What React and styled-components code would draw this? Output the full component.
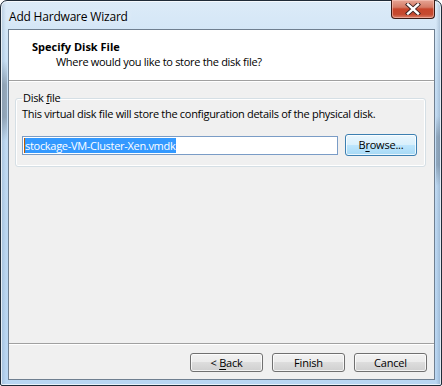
import styled, { createGlobalStyle } from "styled-components";

const GlobalStyle = createGlobalStyle`
  html, body {
    margin: 0;
    padding: 0;
    background: #ffffff;
  }
  body {
    font-family: "Open Sans", "Noto Sans", "DejaVu Sans", sans-serif;
    font-size: 11px;
    letter-spacing: -0.3px;
    color: #000;
  }
`;

const Frame = styled.div`
  box-sizing: border-box;
  width: 442px;
  height: 386px;
  border: 1px solid #1f2b38;
  border-radius: 7px 7px 2px 2px;
  padding: 0 6px 5px 7px;
  display: flex;
  flex-direction: column;
  background:
    linear-gradient(180deg, rgba(160, 175, 190, 0) 0%, rgba(110, 125, 140, 0.55) 30%, rgba(110, 125, 140, 0.55) 70%, rgba(160, 175, 190, 0) 100%) left 1px top 60px / 5px 80px no-repeat,
    linear-gradient(180deg, rgba(160, 175, 190, 0) 0%, rgba(100, 120, 140, 0.5) 30%, rgba(100, 120, 140, 0.5) 70%, rgba(160, 175, 190, 0) 100%) right 1px top 115px / 4px 70px no-repeat,
    linear-gradient(90deg, rgba(120, 150, 180, 0.35) 0px, rgba(255, 255, 255, 0) 5px),
    linear-gradient(270deg, rgba(90, 120, 150, 0.35) 0px, rgba(255, 255, 255, 0) 5px),
    linear-gradient(180deg, #dcebf8 0%, #c6def4 20%, #bcd7f1 60%, #b9d6f2 100%);
  box-shadow: inset 0 0 0 1px rgba(255, 255, 255, 0.7);
`;

const TitleBar = styled.div`
  height: 28px;
  display: flex;
  align-items: flex-start;
  justify-content: space-between;
`;

const Caption = styled.div`
  font-size: 12px;
  letter-spacing: -0.2px;
  line-height: 14px;
  padding-top: 9px;
  padding-left: 1px;
  color: #000;
  text-shadow: 0 0 6px rgba(255, 255, 255, 0.9);
`;

const CloseButton = styled.div`
  box-sizing: border-box;
  width: 44px;
  height: 19px;
  margin-top: -1px;
  border: 1px solid #3b1a14;
  border-top: none;
  border-radius: 0 0 4px 4px;
  background: linear-gradient(180deg, #e6a595 0%, #d57b66 40%, #c7452b 50%, #c54a30 80%, #d8806a 100%);
  box-shadow: inset 0 0 0 1px rgba(255, 210, 200, 0.5);
  display: flex;
  align-items: center;
  justify-content: center;
`;

const Client = styled.div`
  flex: 1;
  display: flex;
  flex-direction: column;
  border: 1px solid #6f7f90;
  background: #f0f0f0;
`;

const Header = styled.div`
  height: 51px;
  background: #ffffff;
  border-bottom: 1px solid #a0a0a0;
  box-shadow: 0 1px 0 #ffffff;
  box-sizing: border-box;
  padding: 9px 0 0 23px;
`;

const HeaderTitle = styled.div`
  font-weight: 700;
  letter-spacing: 0;
  line-height: 15px;
`;

const HeaderSub = styled.div`
  padding-left: 24px;
  line-height: 15px;
`;

const Body = styled.div`
  flex: 1;
  padding: 10px 8px 0 6px;
`;

const GroupBox = styled.fieldset`
  margin: 0;
  height: 76px;
  box-sizing: border-box;
  border: 1px solid #d5dfe5;
  border-radius: 3px;
  padding: 0 8px 0 6px;
  box-shadow: inset 0 0 0 1px #ffffff;
`;

const Legend = styled.legend`
  padding: 0 1px;
  line-height: 14px;
`;

const Desc = styled.div`
  line-height: 15px;
  margin-top: 1px;
  white-space: nowrap;
`;

const Row = styled.div`
  display: flex;
  align-items: center;
  gap: 7px;
  margin-top: 13px;
`;

const TextBox = styled.div`
  box-sizing: border-box;
  width: 316px;
  height: 19px;
  border: 1px solid #7a9cc6;
  background: #fff;
  padding: 1px 1px;
  display: flex;
  align-items: center;
`;

const Caret = styled.span`
  width: 1px;
  height: 15px;
  background: #c05a00;
`;

const Selected = styled.span`
  background: #3399ff;
  color: #fff;
  line-height: 15px;
  height: 15px;
  padding-right: 1px;
`;

const Button = styled.button`
  box-sizing: border-box;
  width: ${(p) => p.$w || 73}px;
  height: ${(p) => p.$h || 19}px;
  padding: 0;
  font-family: inherit;
  font-size: 11px;
  letter-spacing: -0.2px;
  line-height: 14px;
  color: #000;
  border-radius: 3px;
  border: 1px solid ${(p) => (p.$focused ? "#3c7fb1" : "#707070")};
  background: ${(p) =>
    p.$focused
      ? "linear-gradient(180deg, #eaf6fd 0%, #d9f0fc 49%, #bee6fd 50%, #a7d9f5 100%)"
      : "linear-gradient(180deg, #f2f2f2 0%, #ebebeb 49%, #dddddd 50%, #cfcfcf 100%)"};
  box-shadow: inset 0 0 0 1px rgba(255, 255, 255, 0.75);
  u {
    text-decoration: underline;
    text-underline-offset: 2px;
  }
`;

const Footer = styled.div`
  border-top: 1px solid #a0a0a0;
  box-shadow: inset 0 1px 0 #ffffff;
  height: 36px;
  box-sizing: border-box;
  display: flex;
  justify-content: flex-end;
  align-items: flex-start;
  gap: 9px;
  padding: 9px 7px 0 0;
`;

const CloseGlyph = () => (
  <svg width="16" height="12" viewBox="0 0 16 12">
    <path
      d="M3 1.5 L13 10.5 M13 1.5 L3 10.5"
      stroke="#3a2020"
      strokeWidth="4.2"
      strokeLinecap="square"
    />
    <path
      d="M3 1.5 L13 10.5 M13 1.5 L3 10.5"
      stroke="#ffffff"
      strokeWidth="2.4"
      strokeLinecap="square"
    />
  </svg>
);

export default function App() {
  return (
    <>
      <GlobalStyle />
      <Frame>
        <TitleBar>
          <Caption>Add Hardware Wizard</Caption>
          <CloseButton>
            <CloseGlyph />
          </CloseButton>
        </TitleBar>
        <Client>
          <Header>
            <HeaderTitle>Specify Disk File</HeaderTitle>
            <HeaderSub>Where would you like to store the disk file?</HeaderSub>
          </Header>
          <Body>
            <GroupBox>
              <Legend>
                Disk <u>f</u>ile
              </Legend>
              <Desc>
                This virtual disk file will store the configuration details of the physical disk.
              </Desc>
              <Row>
                <TextBox>
                  <Caret />
                  <Selected>stockage-VM-Cluster-Xen.vmdk</Selected>
                </TextBox>
                <Button $w={72} $h={22} $focused>
                  B<u>r</u>owse...
                </Button>
              </Row>
            </GroupBox>
          </Body>
          <Footer>
            <Button>
              &lt; <u>B</u>ack
            </Button>
            <Button>Finish</Button>
            <Button>Cancel</Button>
          </Footer>
        </Client>
      </Frame>
    </>
  );
}
